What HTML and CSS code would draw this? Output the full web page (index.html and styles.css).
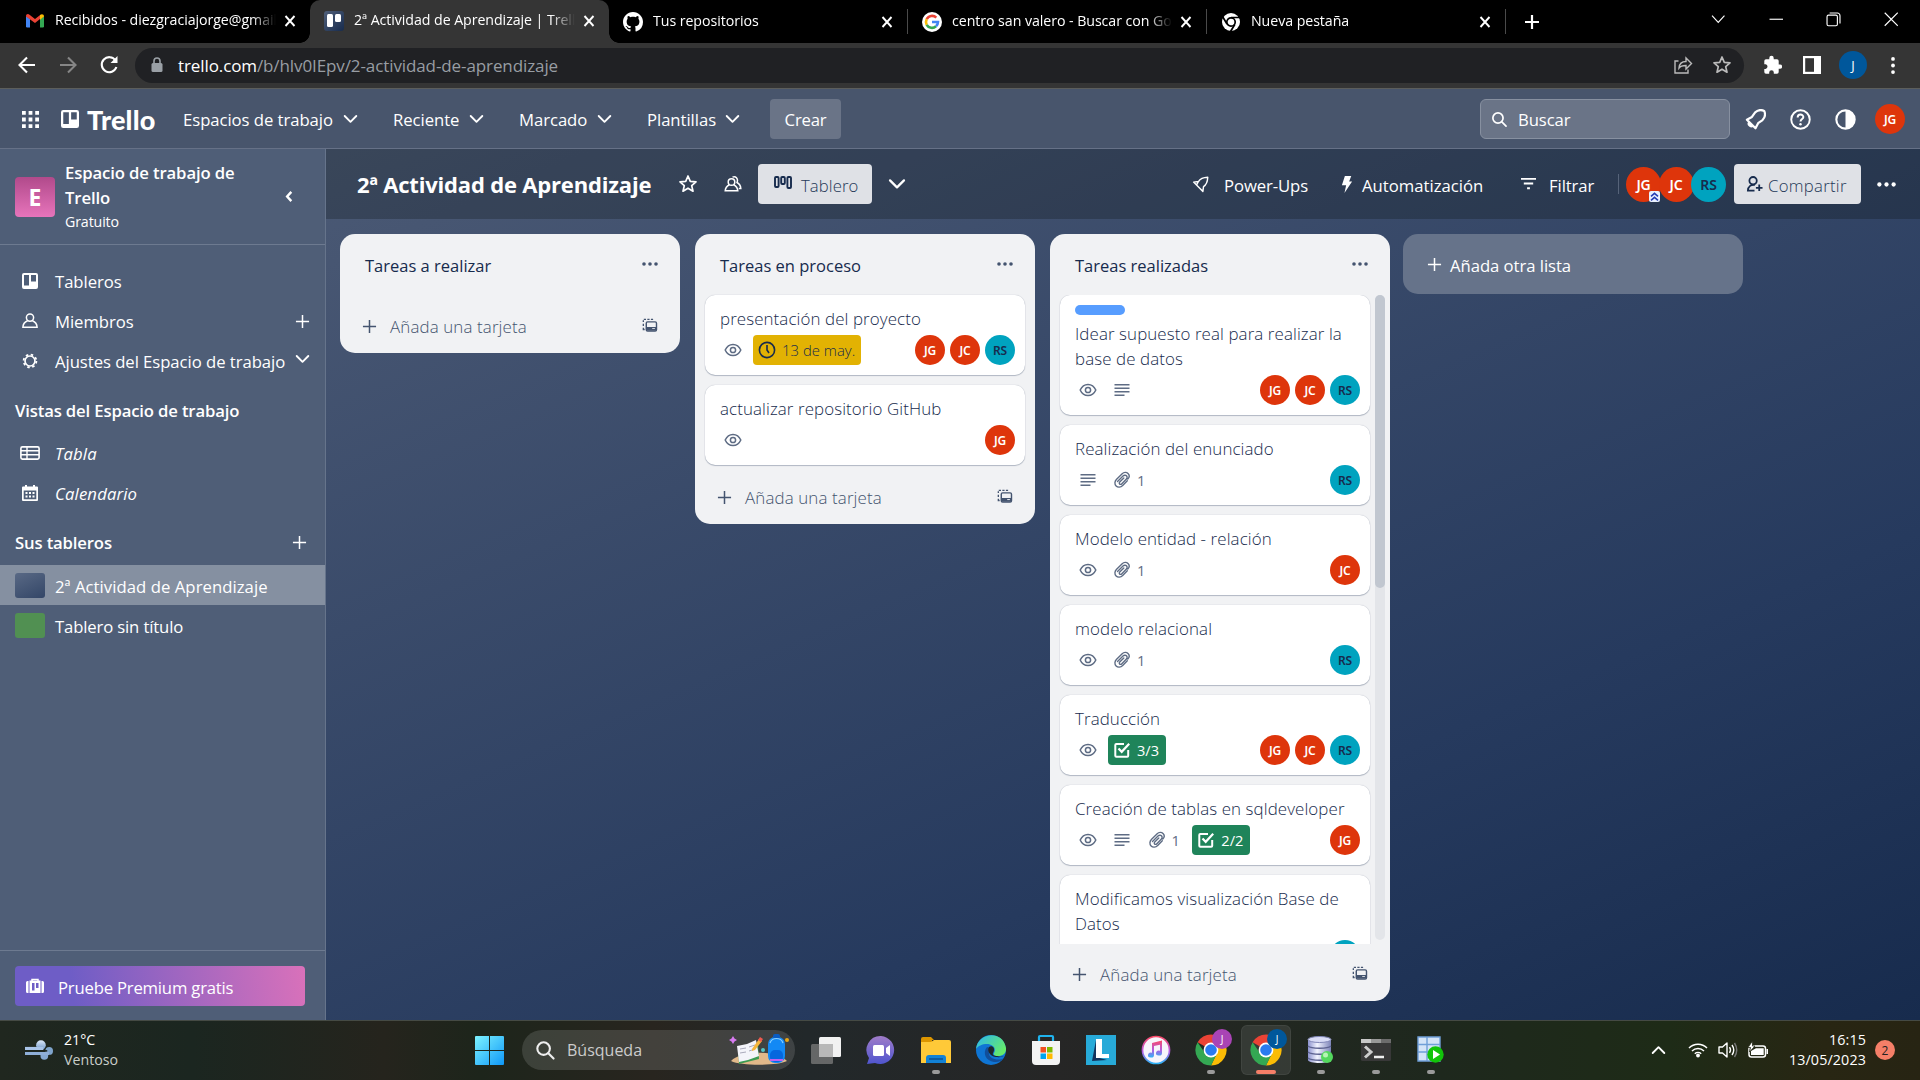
FILE: index.html
```html
<!DOCTYPE html>
<html lang="es">
<head>
<meta charset="utf-8">
<title>2ª Actividad de Aprendizaje | Trello</title>
<link rel="stylesheet" href="styles.css">
</head>
<body>
<svg class="sprite" aria-hidden="true">
  <symbol id="x" viewBox="0 0 12 12"><path d="M1.500 1l9 10m0-10l-9 10" fill="none" stroke="currentColor" stroke-width="1.900"/></symbol>
  <symbol id="plus" viewBox="0 0 16 16"><path d="M8 1v14M1 8h14" fill="none" stroke="currentColor" stroke-width="1.600"/></symbol>
  <symbol id="plusb" viewBox="0 0 16 16"><path d="M8 1v14M1 8h14" fill="none" stroke="currentColor" stroke-width="2.200"/></symbol>
  <symbol id="chev" viewBox="0 0 16 10"><path d="M1.800 1.800L8 8l6.200-6.200" fill="none" stroke="currentColor" stroke-width="2" stroke-linecap="round" stroke-linejoin="round"/></symbol>
  <symbol id="dots" viewBox="0 0 16 4"><circle cx="2" cy="2" r="1.800"/><circle cx="8" cy="2" r="1.800"/><circle cx="14" cy="2" r="1.800"/></symbol>
  <symbol id="eye" viewBox="0 0 20 20"><path d="M2.200 10C3.800 6.400 6.600 4.400 10 4.400S16.200 6.400 17.800 10C16.200 13.600 13.400 15.600 10 15.600S3.800 13.600 2.200 10z" fill="none" stroke="currentColor" stroke-width="1.500"/><circle cx="10" cy="10" r="2.600" fill="none" stroke="currentColor" stroke-width="1.500"/></symbol>
  <symbol id="desc" viewBox="0 0 20 20"><path d="M2.500 4.700h15M2.500 8.200h15M2.500 11.700h15M2.500 15.200h10" stroke="currentColor" stroke-width="1.500"/></symbol>
  <symbol id="clip" viewBox="0 0 20 20"><path d="M5.500 11.600L11 6.100c1.100-1.100 2.600-1.200 3.500-.3s.8 2.400-.3 3.500l-4.600 4.600c-.6.600-1.500.7-2 .1s-.5-1.400.1-2l4.100-4.100M15.300 10.800l-4.600 4.600c-2 2-4.800 2.300-6.600.5s-1.500-4.600.5-6.600l5.600-5.600c1.600-1.600 4.300-1.800 5.800-.3s1.400 3.900-.2 5.600" fill="none" stroke="currentColor" stroke-width="1.400" stroke-linecap="round"/></symbol>
  <symbol id="check" viewBox="0 0 20 20"><path d="M16.200 10v5.800a1 1 0 0 1-1 1H4.300a1 1 0 0 1-1-1V5a1 1 0 0 1 1-1H12" fill="none" stroke="currentColor" stroke-width="2"/><path d="M6.500 8.500l3.200 3.300 7.500-8" fill="none" stroke="currentColor" stroke-width="2.200"/></symbol>
  <symbol id="clock" viewBox="0 0 20 20"><circle cx="10" cy="10" r="7.600" fill="none" stroke="currentColor" stroke-width="1.600"/><path d="M10 5v5l2 3" fill="none" stroke="currentColor" stroke-width="1.600"/></symbol>
  <symbol id="tpl" viewBox="0 0 18 16"><path d="M2 1.200h2.500M6 1.200h2.500M10 1.200h2.500M1.500 2v2M1.500 6v2.500M1.500 10.500v2H3" stroke="currentColor" stroke-width="1.500" fill="none"/><rect x="4.800" y="3.900" width="11.500" height="10.300" rx="1.500" fill="none" stroke="currentColor" stroke-width="1.600"/><path d="M5 9.700h11v4H5z" fill="currentColor"/><path d="M11.500 11h3v1h-3z" fill="#fff"/></symbol>
  <symbol id="board" viewBox="0 0 16 16"><path fill-rule="evenodd" d="M2 0h12a2 2 0 0 1 2 2v12a2 2 0 0 1-2 2H2a2 2 0 0 1-2-2V2a2 2 0 0 1 2-2zM2 2v10.500h5V2zM9 2v6.500h5V2z" fill="currentColor"/></symbol>
  <symbol id="person" viewBox="0 0 16 16"><circle cx="8" cy="4.600" r="3.600" fill="none" stroke="currentColor" stroke-width="1.500"/><path d="M5.600 7.700C2.500 9 1 11 .9 14.200h14.200C15 11 13.500 9 10.400 7.700" fill="none" stroke="currentColor" stroke-width="1.500"/></symbol>
  <symbol id="people" viewBox="0 0 18 18"><circle cx="7.500" cy="7" r="3.300" fill="none" stroke="currentColor" stroke-width="1.500"/><path d="M5.300 9.700C2.500 11 1.400 13 1.200 15.800h12.600c-.2-2.800-1.300-4.800-4.100-6.100M8.500 2.200C11.500.5 14.600 3.500 13 7.500c2.500 1.500 3.700 3.500 3.800 6h-2" fill="none" stroke="currentColor" stroke-width="1.500"/></symbol>
  <symbol id="gear" viewBox="0 0 18 18"><circle cx="9" cy="9" r="5.600" fill="none" stroke="currentColor" stroke-width="1.900"/><circle cx="9" cy="9" r="7.200" fill="none" stroke="currentColor" stroke-width="2" stroke-dasharray="2.800 2.850"/></symbol>
  <symbol id="star" viewBox="0 0 20 20"><path d="M10 2l2.300 5.300 5.700.5-4.300 3.800 1.300 5.600-5-3-5 3 1.300-5.600L2 7.800l5.700-.5z" fill="none" stroke="currentColor" stroke-width="1.700" stroke-linejoin="round"/></symbol>
  <symbol id="rocket" viewBox="0 0 20 20"><path d="M17.500 2.500c-5 .2-8.500 1.800-10.400 4.800l-5.300.6 3.500 3.500 3.300 3.300 3.500 3.500.7-5.300c3-1.900 4.500-5.400 4.700-10.400zM7 7.300l-2 4" fill="none" stroke="currentColor" stroke-width="1.600" stroke-linejoin="round"/></symbol>
  <symbol id="search" viewBox="0 0 20 20"><circle cx="8.200" cy="8.200" r="6" fill="none" stroke="currentColor" stroke-width="2"/><path d="M12.700 12.700l5 5" stroke="currentColor" stroke-width="2" stroke-linecap="round"/></symbol>
  <symbol id="chrome" viewBox="0 0 32 32"><path d="M16 16L2.600 8.200A15.500 15.500 0 0 1 29.400 8.200z" fill="#ea4335"/><path d="M16 16L29.400 8.200A15.500 15.500 0 0 1 16 31.500L22 19z" fill="#fbbc05"/><path d="M16 16l6 3.500L16 31.500A15.500 15.500 0 0 1 2.600 8.200l7.500 11z" fill="#34a853"/><circle cx="16" cy="16" r="7.400" fill="#fff"/><circle cx="16" cy="16" r="5.800" fill="#2a7bf0"/></symbol>
</svg>

<div class="tabs">
  <div class="tab t1">
    <svg class="fav" viewBox="0 0 20 20"><path d="M1 16V5l4 3v8.500H2z" fill="#4285f4"/><path d="M15 8l4-3v11l-1 .5h-3z" fill="#34a853"/><path d="M1 5.500C1 3 3 2.500 4.500 3.700L10 8l5.500-4.300L15 8l-5 4-9-6.500z" fill="#ea4335"/><path d="M15 4c2-1.500 4-.5 4 1.500L15 8.700z" fill="#fbbc04"/></svg>
    <span class="tt">Recibidos - diezgraciajorge@gmail.com</span><svg class="tx"><use href="#x"/></svg>
  </div>
  <div class="tab t2 active">
    <svg class="fav" viewBox="0 0 20 20"><defs><linearGradient id="tf" x2="1" y2="1"><stop stop-color="#505f79"/><stop offset="1" stop-color="#172b4d"/></linearGradient></defs><rect width="20" height="20" rx="3" fill="url(#tf)"/><rect x="3" y="3" width="6" height="13" rx="1.500" fill="#fff"/><rect x="11" y="3" width="6" height="8" rx="1.500" fill="#fff"/></svg>
    <span class="tt">2ª Actividad de Aprendizaje | Trello</span><svg class="tx"><use href="#x"/></svg>
  </div>
  <div class="tab t3">
    <svg class="fav" viewBox="0 0 16 16"><path fill="#fff" d="M8 0C3.580 0 0 3.580 0 8c0 3.540 2.290 6.530 5.470 7.590.4.070.550-.170.550-.380 0-.190-.010-.820-.010-1.490-2.010.370-2.530-.490-2.690-.940-.090-.230-.480-.940-.820-1.130-.280-.150-.680-.520-.010-.530.630-.010 1.080.580 1.230.820.720 1.210 1.870.870 2.330.660.070-.520.280-.870.510-1.070-1.780-.2-3.640-.890-3.640-3.950 0-.870.310-1.590.820-2.150-.080-.2-.360-1.020.080-2.120 0 0 .670-.210 2.200.820.640-.180 1.320-.270 2-.270s1.360.090 2 .270c1.530-1.040 2.200-.820 2.200-.820.440 1.100.160 1.920.080 2.120.510.560.820 1.270.820 2.150 0 3.070-1.870 3.750-3.650 3.950.290.250.540.730.540 1.480 0 1.070-.010 1.930-.010 2.200 0 .210.150.460.550.380A8.010 8.010 0 0 0 16 8c0-4.420-3.580-8-8-8z"/></svg>
    <span class="tt">Tus repositorios</span><svg class="tx"><use href="#x"/></svg>
  </div>
  <div class="tab t4">
    <svg class="fav" viewBox="0 0 20 20"><circle cx="10" cy="10" r="10" fill="#fff"/><g fill="none" stroke-width="2.600"><path d="M14.300 5.600A6 6 0 0 0 4.700 7.200" stroke="#ea4335"/><path d="M4.700 7.200a6 6 0 0 0 0 5.600" stroke="#fbbc05"/><path d="M4.700 12.800a6 6 0 0 0 9.300 1.500" stroke="#34a853"/><path d="M14 14.300a6 6 0 0 0 2-4.300h-6" stroke="#4285f4"/></g></svg>
    <span class="tt">centro san valero - Buscar con Google</span><svg class="tx"><use href="#x"/></svg>
  </div>
  <div class="tab t5">
    <svg class="fav" viewBox="0 0 20 20"><circle cx="10" cy="10" r="9" fill="#fff"/><circle cx="10" cy="10" r="4.200" fill="none" stroke="#000" stroke-width="1.700"/><path d="M10 5.500h9M6 12L1.800 5M13.800 12.500L9.500 19.500" stroke="#000" stroke-width="1.700"/></svg>
    <span class="tt">Nueva pestaña</span><svg class="tx"><use href="#x"/></svg>
  </div>
  <svg class="newtab"><use href="#plusb"/></svg>
  <div class="winctl">
    <svg viewBox="0 0 14 14"><path d="M1 3.500l6 6.500 6-6.500"/></svg>
    <svg viewBox="0 0 14 14"><path d="M.5 7h13"/></svg>
    <svg viewBox="0 0 14 14"><rect x="1" y="3" width="10" height="10.300" rx="1.500"/><path d="M3.500 1h7.500a2.500 2.500 0 0 1 2.500 2.500V11"/></svg>
    <svg viewBox="0 0 14 14"><path d="M.7.700l12.600 12.600M13.300.700L.7 13.300"/></svg>
  </div>
</div>

<div class="toolbar">
  <svg class="nv" viewBox="0 0 20 20"><path d="M18 10H3M10 2.500L2.500 10l7.500 7.500"/></svg>
  <svg class="nv dim" viewBox="0 0 20 20"><path d="M2 10h15M10 2.500l7.500 7.500-7.500 7.500"/></svg>
  <svg class="nv" viewBox="0 0 20 20"><path d="M16.500 5.500A7.500 7.500 0 1 0 17.400 12"/><path d="M18.500 1v7h-7z" fill="#fff" stroke="none"/></svg>
  <div class="omni">
    <svg class="lock" viewBox="0 0 12 16"><rect x=".5" y="6" width="11" height="9" rx="1.500" fill="#9aa0a6"/><path d="M3 6V4a3 3 0 0 1 6 0v2" fill="none" stroke="#9aa0a6" stroke-width="1.600"/></svg>
    <span class="url"><b>trello.com</b>/b/hlv0IEpv/2-actividad-de-aprendizaje</span>
    <svg class="oi" viewBox="0 0 20 20"><path d="M5.500 6H2v12h13v-3.500" fill="none" stroke="#bbb" stroke-width="1.400"/><path d="M6 13c.3-4 2.500-6.500 7-6.500V3l5.500 5.500L13 14v-3.500c-3.500 0-5.500.5-7 2.500z" fill="none" stroke="#bbb" stroke-width="1.400"/></svg>
    <svg class="oi"><use href="#star"/></svg>
  </div>
  <svg class="ti" viewBox="0 0 20 20"><path d="M18 9.500h-1.300V6a1.700 1.700 0 0 0-1.700-1.700h-3.300V3a2.200 2.200 0 0 0-4.400 0v1.300H4A1.700 1.700 0 0 0 2.300 6v3.200h1.300a2.400 2.400 0 0 1 0 4.700H2.300V17A1.700 1.700 0 0 0 4 18.700h3.200v-1.200a2.300 2.300 0 0 1 4.600 0v1.200H15a1.700 1.700 0 0 0 1.700-1.700v-3.300H18a2.100 2.100 0 0 0 0-4.200z" fill="#fff"/></svg>
  <svg class="ti" viewBox="0 0 20 20"><rect x="2.100" y="2.100" width="15.800" height="15.800" fill="none" stroke="#fff" stroke-width="2.200"/><path d="M12 2h6v16h-6z" fill="#fff"/></svg>
  <span class="gav">J</span>
  <svg class="kebab" viewBox="0 0 4 18"><circle cx="2" cy="2" r="2"/><circle cx="2" cy="9" r="2"/><circle cx="2" cy="16" r="2"/></svg>
</div>

<div class="trello">
  <header class="top">
    <svg class="waffle" viewBox="0 0 18 18"><path d="M0 0h4v4H0zM7 0h4v4H7zM14 0h4v4h-4zM0 7h4v4H0zM7 7h4v4H7zM14 7h4v4h-4zM0 14h4v4H0zM7 14h4v4H7zM14 14h4v4h-4z"/></svg>
    <div class="logo"><svg><use href="#board"/></svg><span>Trello</span></div>
    <nav class="nav">
      <span class="n1">Espacios de trabajo<svg><use href="#chev"/></svg></span>
      <span class="n2">Reciente<svg><use href="#chev"/></svg></span>
      <span class="n3">Marcado<svg><use href="#chev"/></svg></span>
      <span class="n4">Plantillas<svg><use href="#chev"/></svg></span>
    </nav>
    <span class="create">Crear</span>
    <div class="search"><svg><use href="#search"/></svg>Buscar</div>
    <svg class="hi" viewBox="0 0 20 20"><path d="M18.300 1.800c-3-1.300-6.400-.8-8.800 1.600L6.600 7.600l-4.800 2.600L10 18.400l2.500-4.900 4.200-3c2.400-2.400 2.900-5.700 1.600-8.700zM4 12.800c-1.500 1.600.9 4.700 3.300 3.200" fill="none" stroke="currentColor" stroke-width="2.100" stroke-linejoin="round"/></svg>
    <svg class="hi" viewBox="0 0 22 22"><circle cx="11" cy="11" r="9.700" fill="none" stroke="currentColor" stroke-width="2"/><path d="M8 8.800c0-4 6-3.800 6-.3 0 2.100-3 2-3 4.700" fill="none" stroke="currentColor" stroke-width="2"/><circle cx="11" cy="16" r="1.300" fill="currentColor"/></svg>
    <svg class="hi" viewBox="0 0 22 22"><circle cx="11" cy="11" r="9.600" fill="none" stroke="currentColor" stroke-width="2.200"/><path d="M11 1a10 10 0 0 1 0 20z" fill="currentColor"/></svg>
    <span class="av red">JG</span>
  </header>
  <div class="body">
    <aside class="side">
      <div class="ws">
        <span class="wslogo">E</span>
        <div class="wsname"><b>Espacio de trabajo de Trello</b><small>Gratuito</small></div>
        <span class="fold"><svg viewBox="0 0 8 14"><path d="M6.500 2L2 7l4.500 5" fill="none" stroke="currentColor" stroke-width="2.600"/></svg></span>
      </div>
      <div class="links">
        <div class="lk"><svg><use href="#board"/></svg><span>Tableros</span></div>
        <div class="lk"><svg><use href="#person"/></svg><span>Miembros</span><svg class="end"><use href="#plus"/></svg></div>
        <div class="lk"><svg><use href="#gear"/></svg><span>Ajustes del Espacio de trabajo</span><svg class="end ch"><use href="#chev"/></svg></div>
        <h3>Vistas del Espacio de trabajo</h3>
        <div class="lk it"><svg class="wide" viewBox="0 0 20 14"><rect x=".9" y=".9" width="18.200" height="12.200" rx="1.500" fill="none" stroke="currentColor" stroke-width="1.600"/><path d="M1 4.800h18M1 8.800h18M7 1v12" stroke="currentColor" stroke-width="1.400"/></svg><span>Tabla</span></div>
        <div class="lk it"><svg viewBox="0 0 16 16"><path fill-rule="evenodd" d="M3 0h2v1.500h6V0h2v1.500h2a1 1 0 0 1 1 1V15a1 1 0 0 1-1 1H1a1 1 0 0 1-1-1V2.500a1 1 0 0 1 1-1h2zM1.700 5.500v8.800h12.600V5.500z" fill="currentColor"/><path d="M3.500 7h2v2h-2zM7 7h2v2H7zM10.500 7h2v2h-2zM3.500 10.500h2v2h-2zM7 10.500h2v2H7zM10.500 10.500h2v2h-2z" fill="currentColor"/></svg><span>Calendario</span></div>
        <h3 class="yours">Sus tableros<svg><use href="#plus"/></svg></h3>
        <div class="bd on"><i class="th blue"></i><span>2ª Actividad de Aprendizaje</span></div>
        <div class="bd"><i class="th green"></i><span>Tablero sin título</span></div>
      </div>
      <div class="prem"><div><svg viewBox="0 0 18 16"><path d="M6 3V1.500h6V3" fill="none" stroke="currentColor" stroke-width="1.500"/><path fill-rule="evenodd" d="M3.500 2.500h11V15h-11zM6 5v7.500h2.500V5zM10 5v5h2.500V5zM0 4.500A1.500 1.500 0 0 1 1.500 3h1v12h-1A1.500 1.500 0 0 1 0 13.500zM15.500 3h1A1.500 1.500 0 0 1 18 4.500v9a1.500 1.500 0 0 1-1.500 1.500h-1z" fill="currentColor"/></svg>Pruebe Premium gratis</div></div>
    </aside>
    <main class="main">
      <div class="bh">
        <h1>2ª Actividad de Aprendizaje</h1>
        <svg class="b1"><use href="#star"/></svg>
        <svg class="b2"><use href="#people"/></svg>
        <span class="btn view"><svg viewBox="0 0 18 14"><g fill="none" stroke="currentColor" stroke-width="1.900"><rect x="1" y="1" width="3.600" height="10" rx="1"/><rect x="7.200" y="1" width="3.600" height="7" rx="1"/><rect x="13.400" y="1" width="3.600" height="11" rx="1"/></g></svg><span>Tablero</span></span>
        <svg class="b3"><use href="#chev"/></svg>
        <span class="act pu"><svg><use href="#rocket"/></svg><span>Power-Ups</span></span>
        <span class="act au"><svg viewBox="0 0 12 20"><path d="M3.500 0H11L8.500 6.500H12L3 20l2-9H0z" fill="currentColor"/></svg><span>Automatización</span></span>
        <span class="act fi"><svg viewBox="0 0 16 14"><path d="M0 1.500h16M3 6.500h10M6.500 11.500h3" stroke="currentColor" stroke-width="2"/></svg><span>Filtrar</span></span>
        <i class="vsep"></i>
        <div class="mem"><span class="av red">JG<svg class="adm" viewBox="0 0 11 11"><rect width="11" height="11" rx="2" fill="#e9f0ff"/><path d="M2 5.300l3.500-3 3.500 3M2 9.300l3.500-3 3.500 3" fill="none" stroke="#253db5" stroke-width="1.600"/></svg></span><span class="av red">JC</span><span class="av teal">RS</span></div>
        <span class="btn share"><svg viewBox="0 0 18 18"><circle cx="7.500" cy="5.500" r="3.900" fill="none" stroke="currentColor" stroke-width="1.900"/><path d="M9.500 10c-4-.8-7.300 1.500-7.500 6h7M14 9.500v7M10.500 13h7" fill="none" stroke="currentColor" stroke-width="1.900"/></svg><span>Compartir</span></span>
        <svg class="b4"><use href="#dots"/></svg>
      </div>
      <div class="lists">
        <section class="list">
          <h2>Tareas a realizar<svg><use href="#dots"/></svg></h2>
          <div class="add"><svg><use href="#plus"/></svg><span>Añada una tarjeta</span><svg class="tpl"><use href="#tpl"/></svg></div>
        </section>
        <section class="list">
          <h2>Tareas en proceso<svg><use href="#dots"/></svg></h2>
          <div class="cards">
            <article class="card"><p>presentación del proyecto</p><div class="row"><span class="bg"><svg><use href="#eye"/></svg></span><span class="bg due"><svg><use href="#clock"/></svg>13 de may.</span><span class="who"><span class="av red">JG</span><span class="av red">JC</span><span class="av teal">RS</span></span></div></article>
            <article class="card"><p>actualizar repositorio GitHub</p><div class="row"><span class="bg"><svg><use href="#eye"/></svg></span><span class="who"><span class="av red">JG</span></span></div></article>
          </div>
          <div class="add"><svg><use href="#plus"/></svg><span>Añada una tarjeta</span><svg class="tpl"><use href="#tpl"/></svg></div>
        </section>
        <section class="list full">
          <h2>Tareas realizadas<svg><use href="#dots"/></svg></h2>
          <div class="scroll">
            <div class="cards">
              <article class="card"><i class="label"></i><p>Idear supuesto real para realizar la base de datos</p><div class="row"><span class="bg"><svg><use href="#eye"/></svg></span><span class="bg"><svg><use href="#desc"/></svg></span><span class="who"><span class="av red">JG</span><span class="av red">JC</span><span class="av teal">RS</span></span></div></article>
              <article class="card"><p>Realización del enunciado</p><div class="row"><span class="bg"><svg><use href="#desc"/></svg></span><span class="bg"><svg><use href="#clip"/></svg>1</span><span class="who"><span class="av teal">RS</span></span></div></article>
              <article class="card"><p>Modelo entidad - relación</p><div class="row"><span class="bg"><svg><use href="#eye"/></svg></span><span class="bg"><svg><use href="#clip"/></svg>1</span><span class="who"><span class="av red">JC</span></span></div></article>
              <article class="card"><p>modelo relacional</p><div class="row"><span class="bg"><svg><use href="#eye"/></svg></span><span class="bg"><svg><use href="#clip"/></svg>1</span><span class="who"><span class="av teal">RS</span></span></div></article>
              <article class="card"><p>Traducción</p><div class="row"><span class="bg"><svg><use href="#eye"/></svg></span><span class="bg done"><svg><use href="#check"/></svg>3/3</span><span class="who"><span class="av red">JG</span><span class="av red">JC</span><span class="av teal">RS</span></span></div></article>
              <article class="card"><p>Creación de tablas en sqldeveloper</p><div class="row"><span class="bg"><svg><use href="#eye"/></svg></span><span class="bg"><svg><use href="#desc"/></svg></span><span class="bg num"><svg><use href="#clip"/></svg>1</span><span class="bg done"><svg><use href="#check"/></svg>2/2</span><span class="who"><span class="av red">JG</span></span></div></article>
              <article class="card"><p>Modificamos visualización Base de Datos</p><div class="row"><span class="who"><span class="av teal">RS</span></span></div></article>
            </div>
            <div class="track"><i></i></div>
          </div>
          <div class="add"><svg><use href="#plus"/></svg><span>Añada una tarjeta</span><svg class="tpl"><use href="#tpl"/></svg></div>
        </section>
        <div class="newlist"><svg><use href="#plus"/></svg>Añada otra lista</div>
      </div>
    </main>
  </div>
</div>

<footer class="task">
  <div class="weather">
    <svg viewBox="0 0 30 22"><defs><linearGradient id="wg" x2="0" y2="1"><stop stop-color="#dce8fa"/><stop offset="1" stop-color="#6d96c6"/></linearGradient></defs><circle cx="16.500" cy="6" r="5" fill="url(#wg)"/><circle cx="25" cy="12" r="4" fill="#7fa4cc"/><circle cx="20" cy="17" r="4" fill="#86a9d2"/><path d="M0 7.800h19v3.200H0z" fill="#a9c4e8"/><path d="M0 13h25v3.200H0z" fill="#8fafd8"/><path d="M0 11.100h23v1.600H0z" fill="#1f2720"/></svg>
    <div><span>21°C</span><em>Ventoso</em></div>
  </div>
  <svg class="win" viewBox="0 0 29 29"><defs><linearGradient id="wn" x2="1" y2="1"><stop stop-color="#7df3ff"/><stop offset="1" stop-color="#0f98f8"/></linearGradient></defs><path d="M0 1q0-1 1-1h13v14H0zM15 0h13q1 0 1 1v13H15zM0 15h14v14H1q-1 0-1-1zM15 15h14v13q0 1-1 1H15z" fill="url(#wn)"/></svg>
  <div class="find"><svg><use href="#search"/></svg><span>Búsqueda</span>
    <svg class="art" viewBox="0 0 60 32"><path d="M2 27c10-11 45-11 56 0-10 5-46 5-56 0z" fill="#e2b98a"/><path d="M9 15l20-6 1 16-20 5z" fill="#3c9b52"/><path d="M8 12l10-2 1 16-9 2zM18 10l9-4 3 16-11 4z" fill="#f4f4fa"/><path d="M11 15l6-1M11 19l6-1M20 13l6-2M20 17l6-2" stroke="#aab" stroke-width="1"/><path d="M23 15l7-10 3 2-7 9-3 1z" fill="#f6b63c"/><path d="M29 6l2-3 3 2-2 3z" fill="#ee5a4f"/><rect x="39" y="3" width="17" height="26" rx="7" fill="#1389f5"/><rect x="44" y="0" width="7" height="5" rx="2" fill="#0a5bc0"/><path d="M41 9c2-6 11-6 13 0" fill="none" stroke="#8ad0ff" stroke-width="1.200"/><rect x="41" y="16" width="13" height="12" rx="5" fill="#0567de"/><path d="M41 26h13" stroke="#c061f2" stroke-width="2"/><path d="M4 2l1.500 2.500L8 6l-2.500 1.500L4 10 2.500 7.500 0 6l2.500-1.500z" fill="#d77bf0"/><circle cx="34" cy="16" r="2" fill="#54c7c9"/><circle cx="58" cy="6" r="2" fill="#eaa715"/></svg>
  </div>
  <div class="apps">
    <div class="app"><svg viewBox="0 0 32 32"><rect x="9" y="3" width="22" height="20" rx="1.500" fill="#f1f1f1"/><rect x="1" y="10" width="22" height="20" rx="1.500" fill="#777" opacity=".8"/><path d="M9 10h14v13H9z" fill="#b8b8b8"/></svg></div>
    <div class="app"><svg viewBox="0 0 32 32"><defs><linearGradient id="ch" x2="0" y2="1"><stop stop-color="#a07cc8"/><stop offset="1" stop-color="#4f55cf"/></linearGradient></defs><path d="M16 2a14 14 0 1 1-6 27l-8 1 2-6A14 14 0 0 1 16 2z" fill="url(#ch)"/><rect x="8" y="11" width="11" height="11" rx="1.500" fill="#fff"/><path d="M21 14l4-3v11l-4-3z" fill="#fff"/></svg></div>
    <div class="app run"><svg viewBox="0 0 32 32"><path d="M1 5q0-2 2-2h8l3 3h-2v4H1z" fill="#dd9600"/><path d="M1 8h10l3-2h15q2 0 2 2v21H1z" fill="#ffc938"/><path d="M6 29v-5q0-3 3-3h14q3 0 3 3v5z" fill="#1282d6"/><path d="M9 25h14" stroke="#0c4f91" stroke-width="1.500"/></svg></div>
    <div class="app"><svg viewBox="0 0 32 32"><defs><linearGradient id="ed" x2="1" y2=".6"><stop stop-color="#2bb5f0"/><stop offset="1" stop-color="#66eb6a"/></linearGradient></defs><circle cx="16" cy="16" r="15" fill="#0f75d4"/><path d="M1 15C3-2 28-4 31 14c.5 5-3 8-8 8-3 0-5-1-4-3 3-5-2-9-7-9-5 0-9 2-11 5z" fill="url(#ed)"/><path d="M12 13c-5 6-1 14 7 15 4 .5 8-1 10-4-4 3-16 2-15-6 0-2 0-3 1-4z" fill="#114f9c"/><path d="M18 19c3-5-1-8-4-6-2 3 0 9 7 10 4 .4 7 0 9-2-2 2-5 2-8 1-3 0-5-1-4-3z" fill="#20272b"/></svg></div>
    <div class="app"><svg viewBox="0 0 32 32"><path d="M9 9V3q0-1 1-1h12q1 0 1 1v6" fill="none" stroke="#1fb3ee" stroke-width="2.200"/><path d="M2 7h28v20q0 4-4 4H6q-4 0-4-4z" fill="#f3f3f3"/><path d="M10.500 13H16v5.500h-5.500z" fill="#f25022"/><path d="M17 13h5.500v5.500H17z" fill="#7fba00"/><path d="M10.500 19.500H16V25h-5.500z" fill="#00a4ef"/><path d="M17 19.500h5.500V25H17z" fill="#ffb900"/></svg></div>
    <div class="app"><svg viewBox="0 0 32 32"><path d="M1 1h30v30H1z" fill="#27aad8"/><path d="M7 27L11 6v17l11 3z" fill="#13335d"/><path d="M11 5h6v15h7v4H11z" fill="#fff"/></svg></div>
    <div class="app"><svg viewBox="0 0 32 32"><defs><linearGradient id="mu" x2="0" y2="1"><stop stop-color="#fb4a68"/><stop offset=".55" stop-color="#b45ae0"/><stop offset="1" stop-color="#2fb5f8"/></linearGradient></defs><circle cx="16" cy="16" r="13.500" fill="#f7f5fb" stroke="url(#mu)" stroke-width="1.700"/><path d="M12 9l10-2.500V19a3 2.500 0 1 1-2-2.300v-6l-6 1.400V21a3 2.500 0 1 1-2-2.300z" fill="url(#mu)"/></svg></div>
    <div class="app run"><svg><use href="#chrome"/></svg><b class="jb">J</b></div>
    <div class="app run cur"><svg><use href="#chrome"/></svg><b class="jb bl">J</b></div>
    <div class="app run"><svg viewBox="0 0 32 32"><defs><linearGradient id="db"><stop stop-color="#8d93cf"/><stop offset=".4" stop-color="#f2f4ff"/><stop offset="1" stop-color="#7d84b9"/></linearGradient></defs><path d="M3 6v20c0 4 23 4 23 0V6z" fill="url(#db)"/><ellipse cx="14.500" cy="5.500" rx="11.500" ry="3" fill="#d9dcf6" stroke="#8187b8"/><path d="M3 12c3 3 20 3 23 0M3 18c3 3 20 3 23 0M3 24c3 3 20 3 23 0" fill="none" stroke="#5c6290" stroke-width="1.300"/><circle cx="22" cy="23" r="6" fill="#54d85e"/><circle cx="20.500" cy="21" r="2.500" fill="#b7f5b5"/></svg></div>
    <div class="app run"><svg viewBox="0 0 32 32"><rect x="1" y="5" width="30" height="22" rx="1.500" fill="#383838"/><path d="M1 5h10v4H1z" fill="#c8c8c8"/><path d="M11 5h10v4H11z" fill="#999"/><path d="M21 5h10v4H21z" fill="#6c6c6c"/><path d="M5 12.500l6 5.500-6 5.500" fill="none" stroke="#ccc" stroke-width="3"/><path d="M14 23h10" stroke="#eee" stroke-width="2.500"/></svg></div>
    <div class="app run"><svg viewBox="0 0 32 32"><path d="M3 3h22v24H3z" fill="#d4e4f8"/><path d="M3 3h22v24H3zM3 10.500h22M3 18h22M12 3v24" fill="none" stroke="#6f9fd8" stroke-width="1.400"/><circle cx="20.500" cy="20.500" r="8.200" fill="#12c40a"/><path d="M18 16l7 4.500-7 4.500z" fill="#fff"/></svg></div>
  </div>
  <div class="tray">
    <svg class="up"><use href="#chev"/></svg>
    <svg class="wifi" viewBox="0 0 20 16"><path d="M1 6a12.500 12.500 0 0 1 18 0M4 9a8.500 8.500 0 0 1 12 0M6.800 11.800a4.700 4.700 0 0 1 6.400 0" fill="none" stroke="#fff" stroke-width="1.500"/><circle cx="10" cy="13.500" r="1.900" fill="#fff"/></svg>
    <svg class="vol" viewBox="0 0 20 18"><path d="M1 6h3.500L9 2v14l-4.500-4H1z" fill="none" stroke="#fff" stroke-width="1.400" stroke-linejoin="round"/><path d="M11.500 6.200q2 2.800 0 5.600M14 4q3.500 5 0 10" fill="none" stroke="#fff" stroke-width="1.400"/><path d="M16.500 2q4.500 7 0 14" fill="none" stroke="#777" stroke-width="1.400"/></svg>
    <svg class="bat" viewBox="0 0 21 18"><rect x="1" y="5" width="16.500" height="11" rx="2.500" fill="none" stroke="#fff" stroke-width="1.500"/><path d="M3 14v-4l5-2.800h7.700V14zM18.500 8h1.500v5h-1.500z" fill="#fff"/><path d="M4.500 0L0 6.500h2.500L1.500 11 7 5H4.500z" fill="#fff" stroke="#252918" stroke-width=".8"/></svg>
    <div class="when"><span>16:15</span><span>13/05/2023</span></div>
    <span class="noti">2</span>
  </div>
</footer>
</body>
</html>
```
FILE: styles.css
```css
* { box-sizing: border-box; }
body { margin: 0; width: 1920px; height: 1080px; overflow: hidden; display: flex; flex-direction: column; background: #000; color: #fff; font-family: "Open Sans", "Noto Sans", sans-serif; font-size: 16.700px; }
svg { display: block; flex: none; fill: currentColor; }
.sprite { position: absolute; width: 0; height: 0; }
h1, h2, h3, p { margin: 0; }
.tabs, .toolbar, .top, .bh, .task, .tab, .omni { display: flex; align-items: center; flex: none; }

/* browser chrome */
.tabs { height: 43px; padding-left: 11px; background: #000; }
.tab { width: 299px; height: 43px; padding: 0 14px 2px 14px; position: relative; font-size: 14.200px; letter-spacing: -.06px; }
.tab.active { background: #353535; border-radius: 10px 10px 0 0; }
.tab.active::before, .tab.active::after { content: ""; position: absolute; bottom: 0; width: 10px; height: 10px; }
.tab.active::before { left: -10px; background: radial-gradient(circle at 0 0, transparent 9.500px, #353535 10px); }
.tab.active::after { right: -10px; background: radial-gradient(circle at 100% 0, transparent 9.500px, #353535 10px); }
.t3, .t4, .t5 { border-right: 1px solid #4a4a4a; height: 25px; padding-bottom: 0; }
.fav { width: 20px; height: 20px; margin-right: 10px; }
.tt { flex: 1; width: 0; white-space: nowrap; overflow: hidden; margin: -2px 8px 0 0; -webkit-mask-image: linear-gradient(90deg, #000 89%, transparent); mask-image: linear-gradient(90deg, #000 89%, transparent); }
.tx { width: 12px; height: 12px; }
.newtab { width: 16px; height: 16px; margin-left: 18px; }
.winctl { display: flex; gap: 43px; margin-left: auto; padding: 0 22px 4px 0; }
.winctl svg { width: 14.500px; height: 14.500px; fill: none; stroke: #fff; stroke-width: 1.100; }
.toolbar { height: 46px; background: #353535; border-bottom: 1px solid #5c5e5c; padding: 0 25px 1px 17px; }
.nv { width: 20px; height: 20px; margin-right: 21px; fill: none; stroke: #fff; stroke-width: 2.100; }
.nv.dim { stroke: #868686; }
.omni { width: 1609px; height: 35px; border-radius: 18px; background: #202124; padding: 0 12px 0 16px; margin-right: 18px; margin-left: -5px; }
.lock { width: 12px; height: 16px; margin-right: 15px; }
.url { flex: 1; color: #989da3; font-size: 17px; letter-spacing: -.1px; }
.url b { color: #fff; font-weight: 400; }
.oi { width: 20px; height: 20px; margin-left: 19px; color: #bbb; }
.ti { width: 20px; height: 20px; margin-right: 20px; }
.gav { width: 28px; height: 28px; border-radius: 50%; background: #00579b; font-size: 13px; display: grid; place-items: center; margin: 0 23px 0 -3px; }
.kebab { width: 4px; height: 17px; margin-left: 1px; }

/* application shell */
.trello { height: 931px; flex: none; display: flex; flex-direction: column; background: linear-gradient(157deg, #505f79 0%, #475672 18%, #263a5e 72%, #172b4d 100%); }
.top { height: 60px; background: #48556c; border-bottom: 1px solid #667187; padding: 1px 15px 0 22px; }
.waffle { width: 17px; height: 17px; margin-right: 21px; }
.logo { display: flex; align-items: center; gap: 7px; width: 123px; font-family: Lato, sans-serif; font-weight: 900; font-size: 27px; line-height: 1; letter-spacing: .2px; }
.logo svg { width: 20px; height: 18px; }
.nav { display: flex; letter-spacing: -.05px; }
.nav span { display: flex; align-items: center; justify-content: space-between; white-space: nowrap; }
.nav svg { width: 15px; height: 10px; }
.n1 { width: 175px; margin-right: 35px; }
.n2 { width: 91px; margin-right: 35px; }
.n3 { width: 93px; margin-right: 35px; }
.n4 { width: 93px; margin-right: 30px; }
.create { width: 71px; height: 40px; border-radius: 4px; background: #6a7487; display: grid; place-items: center; letter-spacing: -.2px; }
.search { width: 250px; height: 40px; margin-left: auto; margin-right: 15px; border: 1px solid #8790a0; border-radius: 6px; background: #6a7487; display: flex; align-items: center; gap: 10px; padding-left: 10px; padding-top: 1px; letter-spacing: -.1px; }
.search svg { width: 17px; height: 17px; }
.hi { width: 21px; height: 21px; margin-right: 24px; }
.av { border-radius: 50%; width: 30px; height: 30px; display: grid; place-items: center; font-family: "Noto Sans", sans-serif; font-size: 12px; font-weight: 600; letter-spacing: -.2px; flex: none; color: #fff; position: relative; }
.top .av { margin-left: -5px; }
.red { background: #de350b; }
.teal { background: #00a3bf; color: #172b4d; }
.body { flex: 1; min-height: 0; display: flex; }

/* sidebar */
.side { width: 326px; flex: none; display: flex; flex-direction: column; background: #4f5e77; border-right: 1px solid #66748b; }
.ws { height: 96px; border-bottom: 1px solid #6d7a90; display: flex; align-items: center; padding: 0 23px 0 15px; }
.wslogo { width: 40px; height: 40px; border-radius: 4px; background: linear-gradient(#b14a8b, #e774bb); font-size: 23px; font-weight: 700; display: grid; place-items: center; margin-right: 10px; }
.wsname { flex: 1; line-height: 25px; letter-spacing: -.12px; }
.wsname b { display: block; font-weight: 600; width: 190px; }
.wsname small { display: block; font-size: 14.200px; line-height: 23px; }
.fold { width: 26px; display: grid; place-items: center; }
.fold svg { width: 8px; height: 13px; }
.links { flex: 1; padding-top: 16px; }
.lk { height: 40px; display: flex; align-items: center; padding: 0 15px 0 22px; letter-spacing: -.05px; white-space: nowrap; }
.lk > svg { width: 16px; height: 16px; margin-right: 17px; }
.lk > svg.wide { width: 20px; height: 14px; margin: 0 15px 0 -2px; }
.lk > svg.end { width: 15px; height: 15px; margin: 0 0 0 auto; }
.lk > svg.ch { height: 10px; margin-top: -4px; }
.it { letter-spacing: .15px; font-style: italic; }
h3 { font-size: 16.700px; font-weight: 600; letter-spacing: -.15px; height: 52px; padding: 6px 18px 0 15px; display: flex; align-items: center; justify-content: space-between; }
h3.yours { padding-top: 7px; }
h3 svg { width: 15px; height: 15px; }
.bd { height: 40px; display: flex; align-items: center; gap: 10px; padding-left: 15px; letter-spacing: .05px; }
.bd span { padding-top: 2px; }
.bd + .bd { letter-spacing: -.15px; }
.bd.on { background: #8590a1; }
.th { width: 30px; height: 25px; border-radius: 3px; }
.blue { background: linear-gradient(155deg, #596985, #334667); }
.green { background: #519052; }
.prem { height: 70px; border-top: 1px solid #6d7a90; padding: 15px; }
.prem div { width: 290px; height: 40px; border-radius: 4px; background: linear-gradient(82deg, #6e5dc6 20%, #d971ba); display: flex; align-items: center; gap: 14px; padding: 2px 0 0 11px; letter-spacing: -.2px; }
.prem svg { width: 18px; height: 16px; margin-top: -3px; }

/* board header */
.main { flex: 1; min-width: 0; }
.bh { height: 70px; padding: 0 24px 0 31px; background: rgba(10, 18, 20, .27); white-space: nowrap; letter-spacing: -.1px; }
h1 { width: 321px; font-size: 22px; font-weight: 700; letter-spacing: -.18px; }
.b1 { width: 20px; height: 20px; margin-right: 26px; }
.b2 { width: 18px; height: 18px; margin-right: 16px; }
.btn { height: 40px; border-radius: 4px; background: #dfe1e6; color: #253858; font-weight: 300; display: flex; align-items: center; letter-spacing: .1px; }
.act span, .btn span { padding-top: 2px; }
.view { width: 114px; padding-left: 16px; gap: 9px; }
.view svg { width: 18px; height: 14px; margin-top: -2px; color: #172b4d; }
.b3 { width: 18px; height: 12px; margin-left: 16px; }
.act { display: flex; align-items: center; }
.pu { margin-left: 286px; width: 149px; gap: 14px; }
.pu svg { width: 18px; height: 18px; }
.au { width: 180px; gap: 9px; letter-spacing: 0; }
.au svg { width: 12px; height: 17px; }
.fi { width: 97px; gap: 13px; }
.fi svg { width: 15px; height: 14px; }
.vsep { width: 1px; height: 20px; background: #566379; margin-right: 7px; }
.mem { display: flex; width: 108px; }
.mem .av { width: 35px; height: 35px; margin-right: -2.500px; font-size: 14px; }
.adm { position: absolute; right: 1px; bottom: 0; width: 11px; height: 11px; }
.share { width: 127px; padding-left: 12px; gap: 5px; letter-spacing: .3px; }
.share svg { width: 17px; height: 18px; color: #172b4d; }
.b4 { width: 19px; height: 5px; margin-left: auto; }

/* lists */
.lists { display: flex; align-items: flex-start; gap: 15px; padding: 15px 0 0 14px; color: #172b4d; }
.list { width: 340px; flex: none; border-radius: 15px; background: #f1f2f4; display: flex; flex-direction: column; overflow: hidden; }
h2 { height: 61px; flex: none; font-size: 16.500px; font-weight: 500; letter-spacing: 0; padding: 2px 22px 0 25px; display: flex; align-items: center; justify-content: space-between; }
h2 svg { width: 16px; height: 4px; color: #44546f; margin-top: -4px; }
.add { height: 58px; flex: none; display: flex; align-items: center; padding: 4px 22px 0 22px; color: #44546f; font-weight: 300; font-size: 16.900px; letter-spacing: .13px; }
.add span { margin-left: 13px; padding-top: 1px; }
.add svg { width: 15px; height: 15px; }
.add .tpl { width: 16px; height: 15px; margin-left: auto; margin-top: -2px; }
.cards { flex: 1; min-width: 0; padding: 0 10px 1px; display: flex; flex-direction: column; gap: 10px; }
.card { background: #fff; border-radius: 10px; padding: 11px 10px 10px 15px; box-shadow: 0 1px 1px rgba(9, 30, 66, .25), 0 0 1px rgba(9, 30, 66, .31); flex: none; }
.card p { font-weight: 300; font-size: 16.900px; line-height: 25px; margin-bottom: 4px; letter-spacing: .1px; margin-right: -6px; }
.label { display: block; width: 50px; height: 10px; border-radius: 5px; background: #579dff; margin: -1px 0 6px; }
.row { display: flex; height: 30px; gap: 5px; margin-left: -2px; }
.bg { display: flex; align-items: center; gap: 5px; padding: 0 5px; border-radius: 4px; color: #5e6c84; font-size: 14.600px; }
.bg svg { width: 20px; height: 20px; margin-left: -.5px; }
.num { padding-right: 7px; }
.due { background: #e2b203; color: #172b4d; padding-right: 6px; font-weight: 300; font-size: 14.800px; letter-spacing: .05px; }
.done { background: #1f845a; color: #fff; padding-right: 7px; }
.who { display: flex; gap: 5px; margin-left: auto; }
.full { height: 767px; }
.full .add { height: 57px; padding-top: 3px; }
.scroll { flex: 1; min-height: 0; display: flex; overflow: hidden; }
.full .cards { flex: none; width: 325px; padding-right: 5px; }
.track { width: 10px; height: 645px; border-radius: 5px; background: #e3e5e9; }
.track i { display: block; height: 293px; border-radius: 5px; background: #c1c7d0; }
.newlist { width: 340px; height: 60px; border-radius: 15px; background: #66738a; display: flex; align-items: center; gap: 8px; padding: 2px 0 0 24px; margin-left: -2px; letter-spacing: -.05px; color: #fff; }
.newlist svg { width: 15px; height: 15px; margin-top: -2px; }

/* taskbar */
.task { height: 60px; padding-bottom: 1px; border-top: 1px solid #454a44; background: linear-gradient(90deg, #20271f 0%, #1b2620 10%, #25241d 20%, #1d251b 25%, #28251f 34%, #22282a 42%, #262626 55%, #1e281d 75%, #1e2b17 87%, #282613 95%, #272413 100%); }
.weather { width: 489px; display: flex; gap: 10px; align-items: center; padding: 0 0 1px 25px; font-size: 14.200px; line-height: 20px; }
.weather svg { width: 29px; height: 22px; }
.weather span, .weather em { display: block; font-style: normal; letter-spacing: 0; }
.weather em { color: #c9cdc9; }
.win { width: 29px; height: 29px; margin-left: -14px; margin-right: 18px; }
.find { width: 273px; height: 40px; border-radius: 20px; background: rgba(255, 255, 255, .13); display: flex; align-items: center; padding: 0 6px 0 13px; font-size: 16px; color: #ccc; }
.find > svg:first-child { width: 21px; height: 21px; margin-right: 11px; color: #eee; }
.art { width: 60px; height: 32px; margin-left: auto; }
.apps { display: flex; gap: 5px; margin-left: 6px; }
.app { width: 50px; height: 50px; border-radius: 6px; position: relative; display: grid; place-items: center; }
.app svg { width: 32px; height: 32px; }
.run::after { content: ""; position: absolute; left: 21px; bottom: 1px; width: 8px; height: 4px; border-radius: 2px; background: #9a9a9a; }
.cur { background: rgba(255, 255, 255, .09); box-shadow: inset 0 0 0 1px rgba(255, 255, 255, .06); }
.run.cur::after { left: 15px; width: 20px; background: #f57f68; }
.jb { position: absolute; right: 4px; top: 4px; width: 20px; height: 20px; border-radius: 50%; background: #a944b5; font-size: 10px; font-weight: 400; display: grid; place-items: center; }
.jb.bl { background: #00579b; }
.tray { margin-left: auto; display: flex; align-items: center; padding-right: 25px; }
.up { width: 15px; height: 10px; transform: rotate(180deg); margin-right: 22px; }
.wifi { width: 20px; height: 16px; margin-right: 10px; }
.vol { width: 20px; height: 18px; margin-right: 10px; }
.bat { width: 21px; height: 18px; margin-right: 19px; }
.when { width: 78px; font-size: 14.300px; line-height: 20px; padding-bottom: 1px; text-align: right; letter-spacing: .12px; white-space: nowrap; display: flex; flex-direction: column; align-items: flex-end; }
.when span { display: block; }
.noti { width: 20px; height: 20px; border-radius: 50%; background: #f57f68; color: #222; font-size: 12px; display: grid; place-items: center; margin-left: 9px; }
```
